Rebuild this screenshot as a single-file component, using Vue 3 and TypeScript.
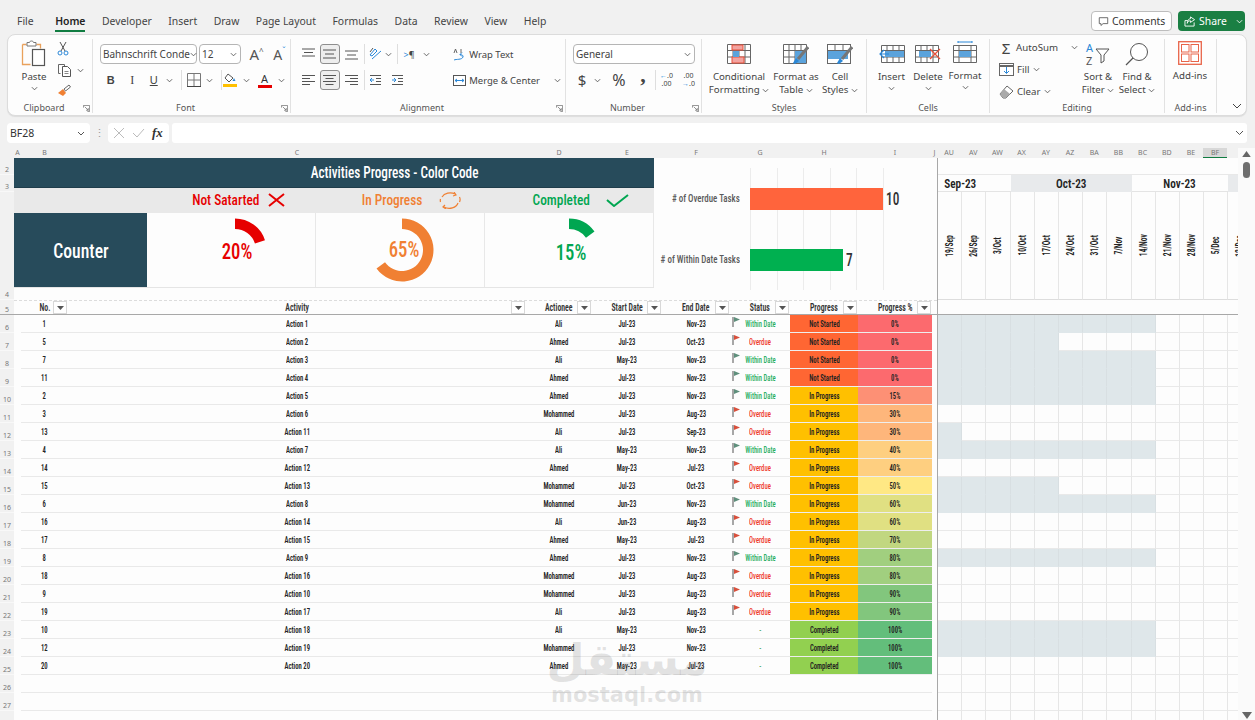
<script setup lang="ts">
interface Row { no: number; action: string; who: string; start: string; end: string; status: string; progress: string; pct: number; shade: number }

const raw: [number, number, string, string, string, string, string, number, number][] = [
  [1, 1, 'Ali', 'Jul-23', 'Nov-23', 'W', 'N', 0, 9],
  [5, 2, 'Ahmed', 'Jul-23', 'Oct-23', 'O', 'N', 0, 5],
  [7, 3, 'Ali', 'May-23', 'Nov-23', 'W', 'N', 0, 9],
  [11, 4, 'Ahmed', 'Jul-23', 'Nov-23', 'W', 'N', 0, 9],
  [2, 5, 'Ahmed', 'Jul-23', 'Nov-23', 'W', 'P', 15, 9],
  [3, 6, 'Mohammed', 'Jul-23', 'Aug-23', 'O', 'P', 30, 0],
  [13, 11, 'Ali', 'Jul-23', 'Sep-23', 'O', 'P', 30, 1],
  [4, 7, 'Ali', 'May-23', 'Nov-23', 'W', 'P', 40, 9],
  [14, 12, 'Ahmed', 'May-23', 'Jul-23', 'O', 'P', 40, 0],
  [15, 13, 'Mohammed', 'Jul-23', 'Oct-23', 'O', 'P', 50, 5],
  [6, 8, 'Mohammed', 'Jun-23', 'Nov-23', 'W', 'P', 60, 9],
  [16, 14, 'Ali', 'Jun-23', 'Aug-23', 'O', 'P', 60, 0],
  [17, 15, 'Ahmed', 'May-23', 'Jul-23', 'O', 'P', 70, 0],
  [8, 9, 'Ahmed', 'Jul-23', 'Nov-23', 'W', 'P', 80, 9],
  [18, 16, 'Mohammed', 'Jul-23', 'Aug-23', 'O', 'P', 80, 0],
  [9, 10, 'Mohammed', 'Jul-23', 'Aug-23', 'O', 'P', 90, 0],
  [19, 17, 'Ali', 'Jul-23', 'Aug-23', 'O', 'P', 90, 0],
  [10, 18, 'Ali', 'May-23', 'Nov-23', '-', 'C', 100, 9],
  [12, 19, 'Mohammed', 'Jul-23', 'Nov-23', '-', 'C', 100, 9],
  [20, 20, 'Ahmed', 'May-23', 'Jul-23', '-', 'C', 100, 0],
]
const labels: Record<string, string> = { N: 'Not Started', P: 'In Progress', C: 'Completed' }
const rows: Row[] = raw.map((r) => ({
  no: r[0], action: 'Action ' + r[1], who: r[2], start: r[3], end: r[4], status: r[5], progress: r[6], pct: r[7], shade: r[8],
}))

function mix(a: number[], b: number[], t: number): string {
  return `rgb(${a.map((v, i) => Math.round(v + (b[i] - v) * t)).join(',')})`
}
function scale(p: number): string {
  const red = [252, 106, 110], yel = [255, 232, 132], grn = [99, 190, 123]
  return p <= 50 ? mix(red, yel, p / 50) : mix(yel, grn, (p - 50) / 50)
}

const tabs = ['File', 'Home', 'Developer', 'Insert', 'Draw', 'Page Layout', 'Formulas', 'Data', 'Review', 'View', 'Help']
const colsA = [['A', 7], ['B', 47], ['C', 458], ['D', 66], ['E', 70], ['F', 68], ['G', 60], ['H', 68], ['I', 74], ['J', 5]] as [string, number][]
const colsB = ['AU', 'AV', 'AW', 'AX', 'AY', 'AZ', 'BA', 'BB', 'BC', 'BD', 'BE', 'BF', '']
const dates = ['19/Sep', '26/Sep', '3/Oct', '10/Oct', '17/Oct', '24/Oct', '31/Oct', '7/Nov', '14/Nov', '21/Nov', '28/Nov', '5/Dec', '12/Dec']
const heads = ['No.', 'Activity', 'Actionee', 'Start Date', 'End Date', 'Status', 'Progress', 'Progress %']

const rowHeads: { n: number; h: number }[] = [
  { n: 2, h: 17 }, { n: 3, h: 17 }, { n: 4, h: 108 }, { n: 5, h: 15 },
  ...Array.from({ length: 22 }, (_, i) => ({ n: i + 6, h: 18 })),
]

// ring gauge: returns an annular sector path for a share of the circle
function arc(p: number): string {
  const R = 31.5, r = 21, c = 33
  const a = (p / 100) * Math.PI * 2
  const large = p > 50 ? 1 : 0
  const sx = c + R * Math.sin(a), sy = c - R * Math.cos(a)
  const ix = c + r * Math.sin(a), iy = c - r * Math.cos(a)
  return `M${c} ${c - R}A${R} ${R} 0 ${large} 1 ${sx} ${sy}L${ix} ${iy}A${r} ${r} 0 ${large} 0 ${c} ${c - r}Z`
}
const gauges = [
  { p: 20, color: '#e60000', pad: 7, top: 22 },
  { p: 65, color: '#f08033', pad: 4, top: 20 },
  { p: 15, color: '#00a651', pad: 0, top: 23 },
]
</script>

<template>
  <div class="app">
    <header class="menu">
      <nav class="tabs">
        <span v-for="t in tabs" :key="t" class="tab" :class="{ on: t === 'Home' }">{{ t }}</span>
      </nav>
      <button class="comments">
        <svg width="11" height="11" viewBox="0 0 13 12"><path d="M1.500 1.500h10v7H6l-2.500 2.200V8.500h-2z" fill="none" stroke="#555" /></svg>
        Comments
      </button>
      <button class="share">
        <svg width="12" height="11" viewBox="0 0 13 12"><path d="M1 5v6h10V7M1 5h3M7 1l4.500 3L7 7V5.200C5 5.200 4 6 3.500 8 3.500 5 5 3 7 3z" fill="none" stroke="#fff" /></svg>
        Share
        <svg class="chev w" viewBox="0 0 8 5"><path d="M1 1l3 3 3-3" /></svg>
      </button>
    </header>

    <section class="ribbon">
      <div class="grp" style="width: 85px">
        <div class="body clip">
          <div class="big paste">
            <svg width="26" height="27" viewBox="0 0 26 27">
              <path d="M1.500 4.500h4M15.500 4.500h4v4M1.500 4.500v20h8" fill="none" stroke="#e9a15b" stroke-width="1.300" />
              <path d="M6 5V2.500h2.500c0-2 4-2 4 0H15V6H6z" fill="#fff" stroke="#777" />
              <rect x="11.500" y="9.500" width="12" height="16" fill="#fff" stroke="#555" stroke-width="1.200" />
            </svg>
            <span>Paste</span>
            <svg class="chev" viewBox="0 0 8 5"><path d="M1 1l3 3 3-3" /></svg>
          </div>
          <div class="stack3">
            <svg width="12" height="14" viewBox="0 0 12 14"><path d="M3 0l5 9M9 0L4 9" fill="none" stroke="#555" /><circle cx="3" cy="11" r="2" fill="none" stroke="#2b88d8" /><circle cx="9" cy="11" r="2" fill="none" stroke="#2b88d8" /></svg>
            <span class="rowi"><svg width="15" height="14" viewBox="0 0 15 14"><path d="M3.500 10.500h-2v-9h6v2" fill="none" stroke="#666" /><path d="M5.500 3.500h5l3 3v7h-8z" fill="#fff" stroke="#555" /><path d="M7.500 8.500h4M7.500 10.500h4" stroke="#888" /></svg><svg class="chev" viewBox="0 0 8 5"><path d="M1 1l3 3 3-3" /></svg></span>
            <svg width="14" height="13" viewBox="0 0 14 13"><path d="M1 9l5-4 3 4-3 3z" fill="#f08033" /><path d="M7 5l5-4 1.500 2-5 4z" fill="#fff" stroke="#666" /></svg>
          </div>
        </div>
        <div class="lbl ln">Clipboard</div>
        <svg class="launch" viewBox="0 0 8 8"><path d="M.5 3V.5H7.500V7.500H5M2 2l4 4M6 3.500V6H3.500" /></svg>
      </div>

      <div class="grp" style="width: 198px">
        <div class="body two">
          <div class="line font1">
            <div class="sel" style="width: 97px"><span>Bahnschrift Conde</span><svg class="chev" viewBox="0 0 8 5"><path d="M1 1l3 3 3-3" /></svg></div>
            <div class="sel" style="width: 42px"><span>12</span><svg class="chev" viewBox="0 0 8 5"><path d="M1 1l3 3 3-3" /></svg></div>
            <span class="aa big1">A<sup>^</sup></span>
            <span class="aa">A<sup class="blue">ˇ</sup></span>
          </div>
          <div class="line font2">
            <b class="t">B</b><i class="t ser">I</i><u class="t">U</u>
            <svg class="chev" viewBox="0 0 8 5"><path d="M1 1l3 3 3-3" /></svg>
            <em class="vsep"></em>
            <svg class="ico" width="14" height="14" viewBox="0 0 14 14"><path d="M.5.500h13v13H.5zM7 .5v13M.5 7h13" fill="none" stroke="#777" /><path d="M0 13.500h14" stroke="#444" /></svg>
            <svg class="chev" viewBox="0 0 8 5"><path d="M1 1l3 3 3-3" /></svg>
            <em class="vsep s3"></em>
            <span class="fillc"><svg width="14" height="10" viewBox="0 0 14 10"><path d="M5 1l5 4-4 4-4-4z" fill="#fff" stroke="#555" /><path d="M11 5l1.500 3h-3z" fill="#2b88d8" /></svg><i class="bar y"></i></span>
            <svg class="chev" viewBox="0 0 8 5"><path d="M1 1l3 3 3-3" /></svg>
            <span class="fillc a1"><span>A</span><i class="bar r"></i></span>
            <svg class="chev" viewBox="0 0 8 5"><path d="M1 1l3 3 3-3" /></svg>
          </div>
        </div>
        <div class="lbl ln">Font</div>
        <svg class="launch" viewBox="0 0 8 8"><path d="M.5 3V.5H7.500V7.500H5M2 2l4 4M6 3.500V6H3.500" /></svg>
      </div>

      <div class="grp" style="width: 275px">
        <div class="body alg">
          <div class="alg-l">
            <div class="line agap">
              <span class="ab"><svg width="13" height="12" viewBox="0 0 13 12"><path d="M0 1h13M2 4.500h9M0 8h13" stroke="#555" /></svg></span>
              <span class="ab act"><svg width="13" height="12" viewBox="0 0 13 12"><path d="M0 2h13M2 6h9M0 10h13" stroke="#555" /></svg></span>
              <span class="ab"><svg width="13" height="12" viewBox="0 0 13 12"><path d="M0 3h13M2 7h9M0 11h13" stroke="#555" /></svg></span>
              <em class="vsep"></em>
              <span class="ab"><svg width="14" height="14" viewBox="0 0 14 14"><path d="M1 8l5-6 2 2-5 5zM3 12l9-8" fill="none" stroke="#2b88d8" /><path d="M1 5l3-4" stroke="#555" /></svg></span>
              <svg class="chev c1" viewBox="0 0 8 5"><path d="M1 1l3 3 3-3" /></svg>
              <em class="vsep s2"></em>
              <span class="ab rtl"><em class="blue">&gt;</em>¶</span>
              <svg class="chev" viewBox="0 0 8 5"><path d="M1 1l3 3 3-3" /></svg>
            </div>
            <div class="line agap">
              <span class="ab"><svg width="13" height="12" viewBox="0 0 13 12"><path d="M0 1.500h13M0 4.500h8M0 7.500h13M0 10.500h8" stroke="#555" /></svg></span>
              <span class="ab act"><svg width="13" height="12" viewBox="0 0 13 12"><path d="M0 1.500h13M2.500 4.500h8M0 7.500h13M2.500 10.500h8" stroke="#555" /></svg></span>
              <span class="ab"><svg width="13" height="12" viewBox="0 0 13 12"><path d="M0 1.500h13M5 4.500h8M0 7.500h13M5 10.500h8" stroke="#555" /></svg></span>
              <em class="vsep"></em>
              <span class="ab"><svg width="13" height="12" viewBox="0 0 13 12"><path d="M1 1.500h11M7 4.500h5M7 7.500h5M1 10.500h11" stroke="#555" /><path d="M5 6H1M3 4L1 6l2 2" fill="none" stroke="#2b88d8" /></svg></span>
              <span class="ab"><svg width="13" height="12" viewBox="0 0 13 12"><path d="M1 1.500h11M7 4.500h5M7 7.500h5M1 10.500h11" stroke="#555" /><path d="M1 6h4M3 4l2 2-2 2" fill="none" stroke="#2b88d8" /></svg></span>
            </div>
          </div>
          <div class="alg-r">
            <div class="line wrap">
              <svg width="13" height="13" viewBox="0 0 13 13"><path d="M1 12c2-1 8 0 9-3 .5-1.500-1-2.500-3-2.500M7 6.500l2-2M7 6.500l2 2" fill="none" stroke="#2b88d8" /><path d="M1 5l1.500-4L4 5M8 1v4" fill="none" stroke="#666" /></svg>
              <span>Wrap Text</span>
            </div>
            <div class="line wrap">
              <svg width="13" height="13" viewBox="0 0 13 13"><rect x=".5" y="1.500" width="12" height="10" fill="#fff" stroke="#555" /><path d="M2 6.500h9M2 6.500l2-1.500M2 6.500l2 1.500M11 6.500l-2-1.500M11 6.500l-2 1.500" fill="none" stroke="#2b88d8" /></svg>
              <span>Merge &amp; Center</span>
              <svg class="chev" viewBox="0 0 8 5"><path d="M1 1l3 3 3-3" /></svg>
            </div>
          </div>
        </div>
        <div class="lbl ln">Alignment</div>
        <svg class="launch" viewBox="0 0 8 8"><path d="M.5 3V.5H7.500V7.500H5M2 2l4 4M6 3.500V6H3.500" /></svg>
      </div>

      <div class="grp" style="width: 136px">
        <div class="body two num">
          <div class="sel" style="width: 122px"><span>General</span><svg class="chev" viewBox="0 0 8 5"><path d="M1 1l3 3 3-3" /></svg></div>
          <div class="line nums">
            <span class="sym">$</span><svg class="chev" viewBox="0 0 8 5"><path d="M1 1l3 3 3-3" /></svg>
            <span class="sym pct">%</span>
            <span class="sym cm">,</span>
            <em class="vsep"></em>
            <span class="dec"><em class="blue">←</em>.0<br />.00</span>
            <span class="dec">.00<br /><em class="blue">→</em>.0</span>
          </div>
        </div>
        <div class="lbl ln">Number</div>
        <svg class="launch" viewBox="0 0 8 8"><path d="M.5 3V.5H7.500V7.500H5M2 2l4 4M6 3.500V6H3.500" /></svg>
      </div>

      <div class="grp" style="width: 165px">
        <div class="body bigs styles">
          <div class="big" style="width: 64px">
            <svg width="24" height="20" viewBox="0 0 24 20"><path d="M.5.500h23v19H.5zM6 .5v19M12 .5v19M18 .5v19M.5 6.500h23M.5 13h23" fill="#fff" stroke="#666" /><rect x="5" y="1" width="11" height="5" fill="#f2a3a0" stroke="#e8503a" /><rect x="5" y="13" width="12" height="6" fill="#f2a3a0" stroke="#e8503a" /><rect x="6" y="7" width="6" height="6" fill="#5ba3dc" /></svg>
            <span>Conditional</span><span>Formatting <svg class="chev" viewBox="0 0 8 5"><path d="M1 1l3 3 3-3" /></svg></span>
          </div>
          <div class="big" style="width: 50px">
            <svg width="26" height="20" viewBox="0 0 26 20"><path d="M.5.500h23v19H.5zM6 .5v19M12 .5v19M18 .5v19M.5 6.500h23M.5 13h23" fill="#fff" stroke="#666" /><rect x="12" y="7" width="11" height="12" fill="#5ba3dc" /><path d="M25 3L15 15" stroke="#777" stroke-width="3" /><path d="M13 14l3 3-4 3-2-1z" fill="#2b88d8" /></svg>
            <span>Format as</span><span>Table <svg class="chev" viewBox="0 0 8 5"><path d="M1 1l3 3 3-3" /></svg></span>
          </div>
          <div class="big" style="width: 38px">
            <svg width="26" height="20" viewBox="0 0 26 20"><rect x=".5" y=".5" width="23" height="19" fill="#fff" stroke="#666" /><path d="M.5 6.500h23M8 .5v6M16 .5v6" stroke="#666" fill="none" /><rect x="1" y="7" width="20" height="8" fill="#5ba3dc" /><path d="M25 3L15 15" stroke="#777" stroke-width="3" /><path d="M13 14l3 3-4 3-2-1z" fill="#2b88d8" /></svg>
            <span>Cell</span><span>Styles <svg class="chev" viewBox="0 0 8 5"><path d="M1 1l3 3 3-3" /></svg></span>
          </div>
        </div>
        <div class="lbl">Styles</div>
      </div>

      <div class="grp" style="width: 123px">
        <div class="body bigs cells">
          <div class="big" style="width: 37px">
            <svg width="26" height="20" viewBox="0 0 26 20"><path d="M2.500 1.500h23v17h-23zM8 1.500v17M14 1.500v17M20 1.500v17M2.500 6.500h23M2.500 13h23" fill="#fff" stroke="#666" /><rect x="6" y="7" width="19" height="6" fill="#5ba3dc" /><path d="M10 10H1M5 6l-4 4 4 4" fill="none" stroke="#2b88d8" stroke-width="1.200" /></svg>
            <span>Insert</span>
            <svg class="chev" viewBox="0 0 8 5"><path d="M1 1l3 3 3-3" /></svg>
          </div>
          <div class="big" style="width: 36px">
            <svg width="26" height="20" viewBox="0 0 26 20"><path d="M.5 1.500h23v17H.5zM6 1.500v17M12 1.500v17M18 1.500v17M.5 6.500h23M.5 13h23" fill="#fff" stroke="#666" /><rect x="4" y="7" width="12" height="6" fill="#5ba3dc" /><path d="M15 5l10 10M25 5L15 15" stroke="#e8503a" stroke-width="1.300" /></svg>
            <span>Delete</span>
            <svg class="chev" viewBox="0 0 8 5"><path d="M1 1l3 3 3-3" /></svg>
          </div>
          <div class="big" style="width: 38px">
            <svg width="24" height="22" viewBox="0 0 24 22" class="up u2"><path d="M.5 4.500h23v17H.5zM6 4.500v17M18 4.500v17M.5 9.500h23M.5 16h23" fill="#fff" stroke="#666" /><rect x="6" y="10" width="12" height="6" fill="#5ba3dc" /><path d="M5 1h14M5 0v2M19 0v2" stroke="#2b88d8" /></svg>
            <span>Format</span>
            <svg class="chev" viewBox="0 0 8 5"><path d="M1 1l3 3 3-3" /></svg>
          </div>
        </div>
        <div class="lbl">Cells</div>
      </div>

      <div class="grp" style="width: 175px">
        <div class="body bigs edit">
          <div class="ecol">
            <div class="line"><span class="sig">Σ</span><span>AutoSum</span><svg class="chev far" viewBox="0 0 8 5"><path d="M1 1l3 3 3-3" /></svg></div>
            <div class="line"><svg width="15" height="13" viewBox="0 0 15 13"><rect x=".5" y=".5" width="14" height="12" fill="#fff" stroke="#666" /><path d="M.5 3h14" stroke="#666" stroke-width="2" /><path d="M7.500 4v6M5 8l2.500 2.500L10 8" fill="none" stroke="#2b88d8" /></svg><span>Fill</span><svg class="chev" viewBox="0 0 8 5"><path d="M1 1l3 3 3-3" /></svg></div>
            <div class="line"><svg width="15" height="14" viewBox="0 0 15 14"><path d="M1 9l7-8 6 5-7 7H4z" fill="#fff" stroke="#666" /><path d="M1 9l4-5 6 5-4 4H4z" fill="#aaa" /></svg><span>Clear</span><svg class="chev" viewBox="0 0 8 5"><path d="M1 1l3 3 3-3" /></svg></div>
          </div>
          <div class="big" style="width: 40px">
            <svg width="26" height="26" viewBox="0 0 26 26" class="up"><text x="1" y="11" font-size="11" fill="#2b88d8" font-family="Noto Sans">A</text><text x="1" y="24" font-size="11" fill="#555" font-family="Noto Sans">Z</text><path d="M11 8h13l-5 6v6l-3 2v-8z" fill="#fff" stroke="#555" /></svg>
            <span>Sort &amp;</span><span>Filter <svg class="chev" viewBox="0 0 8 5"><path d="M1 1l3 3 3-3" /></svg></span>
          </div>
          <div class="big" style="width: 38px">
            <svg width="26" height="26" viewBox="0 0 26 26" class="up"><circle cx="15" cy="11" r="8.500" fill="#fff" stroke="#555" /><path d="M9 17L2 24" stroke="#555" stroke-width="1.200" /></svg>
            <span>Find &amp;</span><span>Select <svg class="chev" viewBox="0 0 8 5"><path d="M1 1l3 3 3-3" /></svg></span>
          </div>
        </div>
        <div class="lbl">Editing</div>
      </div>

      <div class="grp" style="width: 52px">
        <div class="body bigs adds">
          <div class="big" style="width: 50px">
            <svg width="24" height="24" viewBox="0 0 24 24" class="up"><rect x=".7" y=".7" width="22.600" height="22.600" fill="#fff" stroke="#e8654a" stroke-width="1.300" /><rect x="3.500" y="3.500" width="7.500" height="7.500" fill="none" stroke="#e8654a" /><rect x="13" y="3.500" width="7.500" height="7.500" fill="none" stroke="#e8654a" /><rect x="3.500" y="13" width="7.500" height="7.500" fill="none" stroke="#e8654a" /><rect x="13" y="13" width="7.500" height="7.500" fill="none" stroke="#e8654a" /></svg>
            <span class="lift">Add-ins</span>
          </div>
        </div>
        <div class="lbl">Add-ins</div>
      </div>
      <div class="collapse"><svg width="10" height="6" viewBox="0 0 10 6"><path d="M1 1l4 4 4-4" fill="none" stroke="#444" /></svg></div>
    </section>

    <section class="fbar">
      <div class="name"><span>BF28</span><svg class="chev d" viewBox="0 0 8 5"><path d="M1 1l3 3 3-3" /></svg></div>
      <span class="dots">⋮</span>
      <div class="fx">
        <svg width="12" height="12" viewBox="0 0 12 12"><path d="M1 1l10 10M11 1L1 11" stroke="#bbb" /></svg>
        <svg width="13" height="12" viewBox="0 0 13 12"><path d="M1 6l4 4 7-8" fill="none" stroke="#bbb" /></svg>
        <span class="fxt">fx</span>
      </div>
      <div class="input"><svg width="9" height="6" viewBox="0 0 9 6"><path d="M1 1l3.500 3.500L8 1" fill="none" stroke="#555" /></svg></div>
    </section>

    <div class="colbar">
      <div class="colhead">
        <span class="corner"></span>
        <span v-for="c in colsA" :key="c[0]" class="ch" :style="{ width: c[1] + 'px' }">{{ c[0] }}</span>
        <span v-for="(c, i) in colsB" :key="i" class="ch cb" :class="{ cur: c === 'BF' }">{{ c }}</span>
      </div>
      <div class="sup"><svg width="9" height="6" viewBox="0 0 10 7"><path d="M0 7L5 0l5 7z" fill="#666" /></svg></div>
    </div>

    <section class="sheet">
      <aside class="rowhead">
        <span v-for="r in rowHeads" :key="r.n" class="rh" :class="{ cur: r.n === 28, frz: r.n === 5 }" :style="{ height: r.h + 'px' }">{{ r.n === 28 ? '' : r.n }}</span>
      </aside>

      <main class="main">
        <div class="dash">
          <div class="panel">
            <div class="title cd"><span>Activities Progress - Color Code</span></div>
            <div class="band">
              <span class="b0"></span>
              <div class="bi b1 red cd"><span>Not Satarted</span><svg width="17" height="14" viewBox="0 0 17 14"><path d="M1 1l15 12M16 1L1 13" stroke="#e60000" stroke-width="2" /></svg></div>
              <div class="bi b2 org cd"><span>In Progress</span><svg width="22" height="17" viewBox="0 0 22 17"><path d="M3 5a9 7 0 0 1 13-3M19 11a9 7 0 0 1-14 4M1.500 10a9 7 0 0 1 0-3M20.500 5a9 7 0 0 1 0 5" fill="none" stroke="#f08033" stroke-width="1.200" /><path d="M15 0l2 3-3 1M6 13l-2 2 3 2" fill="none" stroke="#f08033" stroke-width="1.200" /></svg></div>
              <div class="bi b3 grn cd"><span>Completed</span><svg width="23" height="13" viewBox="0 0 23 13"><path d="M1 6l7 6L22 1" fill="none" stroke="#00a651" stroke-width="2" /></svg></div>
            </div>
            <div class="stats">
              <div class="counter cd"><span>Counter</span></div>
              <div v-for="g in gauges" :key="g.p" class="gauge" :style="{ paddingLeft: g.pad + 'px' }">
                <div class="gw">
                  <svg width="66" height="66" viewBox="0 0 66 66"><path :d="arc(g.p)" :fill="g.color" /></svg>
                  <span class="gv cd" :style="{ color: g.color, top: g.top + 'px' }"><span>{{ g.p }}%</span></span>
                </div>
              </div>
            </div>
          </div>
          <div class="chart">
            <div class="crow">
              <span class="clbl cd"><span># of Overdue Tasks</span></span>
              <div class="plot"><i class="cbar o"></i><span class="cval cd"><span>10</span></span></div>
            </div>
            <div class="crow">
              <span class="clbl cd"><span># of Within Date Tasks</span></span>
              <div class="plot"><i class="cbar g"></i><span class="cval cd"><span>7</span></span></div>
            </div>
          </div>
        </div>

        <div class="trow thead">
          <span class="a"></span>
          <span v-for="h in heads" :key="h" class="th cd"><span class="tl">{{ h }}</span><i class="flt"><svg width="7" height="4" viewBox="0 0 7 4"><path d="M0 0h7L3.500 4z" fill="#555" /></svg></i></span>
          <span class="a"></span>
        </div>
        <div v-for="r in rows" :key="r.no" class="trow">
          <span class="a"></span>
          <span class="td cd"><span>{{ r.no }}</span></span>
          <span class="td cd"><span>{{ r.action }}</span></span>
          <span class="td cd"><span>{{ r.who }}</span></span>
          <span class="td cd"><span>{{ r.start }}</span></span>
          <span class="td cd"><span>{{ r.end }}</span></span>
          <span class="td st cd" :class="r.status">
            <svg v-if="r.status !== '-'" class="flag" width="10" height="10" viewBox="0 0 10 10"><path d="M1 0v10" stroke="#8a8a8a" stroke-width="1.500" /><path d="M2 0l6 2.500L2 5z" :fill="r.status === 'W' ? '#5f8f7c' : '#d8503c'" /></svg>
            <span class="stx">{{ r.status === 'W' ? 'Within Date' : r.status === 'O' ? 'Overdue' : '-' }}</span>
          </span>
          <span class="td pr cd" :class="r.progress"><span>{{ labels[r.progress] }}</span></span>
          <span class="td pc cd" :style="{ background: scale(r.pct) }"><span>{{ r.pct }}%</span></span>
          <span class="a"></span>
        </div>
        <div v-for="n in 4" :key="'e' + n" class="trow">
          <span class="a"></span>
          <span v-for="m in 8" :key="m" class="td"></span>
          <span class="a"></span>
        </div>
        <div class="mark" aria-hidden="true">
          <span class="mar">مستقل</span>
          <span class="men">mostaql.com</span>
        </div>
      </main>

      <div class="gantt">
        <div class="g0"></div>
        <div class="gm">
          <span class="m lead cd" style="grid-column: span 3"><span>Sep-23</span></span>
          <span class="m alt cd" style="grid-column: span 5"><span>Oct-23</span></span>
          <span class="m cd" style="grid-column: span 4"><span>Nov-23</span></span>
          <span class="m alt"></span>
        </div>
        <div class="gd">
          <span v-for="d in dates" :key="d" class="gdc"><span class="vt">{{ d }}</span></span>
        </div>
        <div class="gb"></div>
        <div v-for="(r, i) in rows" :key="i" class="gr">
          <span v-for="k in 13" :key="k" class="gc" :class="{ sh: k <= r.shade }"></span>
        </div>
        <div v-for="n in 4" :key="'g' + n" class="gr">
          <span v-for="k in 13" :key="k" class="gc" :class="{ sel: n === 4 && k === 12 }"></span>
        </div>
      </div>

      <aside class="vs">
        <i class="thumb"></i>
        <svg class="dn" width="10" height="7" viewBox="0 0 10 7"><path d="M0 0l5 7 5-7z" fill="#666" /></svg>
      </aside>
    </section>
  </div>
</template>

<style>
html, body { margin: 0; background: #f1f1f1; }
</style>

<style scoped>
.app { width: 1255px; height: 720px; overflow: hidden; display: flex; flex-direction: column; background: #f1f1f1; font-family: "Noto Sans", sans-serif; color: #444; font-size: 10.5px; }
svg { flex: none; display: block; }
em, i { font-style: normal; }
.chev { width: 7px; height: 5px; fill: none; stroke: #555; stroke-width: 1; display: inline-block; }
.chev.w { stroke: #fff; }

.menu { height: 34px; display: flex; align-items: flex-start; padding-left: 17px; box-sizing: border-box; flex: none; }
.tabs { flex: 1; display: flex; gap: 16.500px; font-size: 10.400px; padding-top: 13px; }
.tab { height: 17px; line-height: 16px; }
.tab:first-child { margin-right: 5px; }
.tab.on { color: #222; font-weight: 600; border-bottom: 2px solid #107c41; }
.comments, .share { font: inherit; display: flex; align-items: center; height: 20px; margin-top: 11px; box-sizing: border-box; border-radius: 4px; gap: 3px; }
.comments { width: 81px; background: #fff; border: 1px solid #bdbdbd; padding: 0 0 0 6px; font-size: 10.400px; color: #333; }
.share { width: 67px; margin: 11px 10px 0 6px; background: #1a7f43; border: 0; color: #fff; padding: 0 0 0 6px; font-size: 10.400px; }
.share .chev { margin-left: 6px; }

.ribbon { flex: none; height: 82px; margin: 0 8px 0 7px; box-sizing: border-box; background: #fdfdfd; border: 1px solid #dcdcdc; border-radius: 8px; display: flex; box-shadow: 0 1px 1px #ddd; position: relative; }
.grp { position: relative; flex: none; display: flex; flex-direction: column; border-right: 1px solid #e2e2e2; margin: 4px 0 2px; box-sizing: border-box; }
.body { flex: 1; display: flex; min-height: 0; }
.lbl { height: 11px; line-height: 11px; font-size: 9px; text-align: center; color: #555; }
.lbl.ln { padding-right: 12px; }
.launch { position: absolute; right: 2px; bottom: 1px; width: 7px; height: 7px; fill: none; stroke: #666; stroke-width: .8; }

.big { display: flex; flex-direction: column; align-items: center; line-height: 13px; white-space: nowrap; font-size: 9.700px; }
.big > svg:first-child { margin-bottom: 6px; height: 20px; }
.big > svg.up { margin-top: -3px; margin-bottom: 3px; height: auto; }
.big > svg.u2 { margin-bottom: 6px; }
.big > .chev { margin-top: 3px; }
.big .lift { margin-top: 1px; }
.clip { padding: 0 0 0 13px; gap: 10px; }
.paste { width: 26px; padding-top: 1px; }
.paste > svg:first-child { height: 27px; margin-bottom: 3px; }
.stack3 { display: flex; flex-direction: column; gap: 7px; padding-top: 3px; }
.rowi { display: flex; align-items: center; gap: 5px; }

.two { flex-direction: column; gap: 6px; padding: 5px 0 0 7px; }
.line { display: flex; align-items: center; height: 20px; white-space: nowrap; }
.sel { height: 20px; box-sizing: border-box; border: 1px solid #b5b5b5; border-radius: 4px; display: flex; align-items: center; justify-content: space-between; padding: 0 3px 0 2px; background: #fff; font-size: 10px; color: #444; }
.font1 { gap: 2px; }
.aa { font-size: 14px; width: 21px; text-align: center; color: #555; }
.aa sup { font-size: 8px; line-height: 0; }
.aa.big1 { font-size: 15px; margin-left: 3px; }
.blue { color: #2b88d8; font-style: normal; }
.font2 { gap: 0; color: #444; }
.t { width: 21.500px; text-align: center; font-size: 11px; font-family: "Liberation Sans", sans-serif; }
.ser { font-family: "Liberation Serif", serif; font-size: 12px; }
.font2 .chev { margin: 0 3px 0 1px; }
.vsep { width: 1px; height: 20px; background: #dedede; margin: 0 5px; flex: none; }
.font2 .s3 { margin-right: 1px; }
.font2 .ico { margin-left: 0; margin-right: 4px; }
.fillc { display: flex; flex-direction: column; align-items: center; width: 14px; margin-right: 5px; gap: 1px; }
.a1 { margin-left: 5px; font-size: 11px; line-height: 11px; color: #333; }
.bar { display: block; width: 14px; height: 3px; }
.bar.y { background: #ffc000; }
.bar.r { background: #e60000; }

.alg { padding: 5px 0 0 7px; }
.alg-l { display: flex; flex-direction: column; gap: 6px; width: 151px; }
.agap { gap: 0; }
.ab { width: 20px; height: 20px; margin-right: 1.500px; display: flex; align-items: center; justify-content: center; box-sizing: border-box; font-size: 10px; color: #444; }
.ab.act { border: 1px solid #8e8e8e; background: #eeeeee; border-radius: 3px; }
.alg .vsep { margin: 0 1px 0 1px; }
.alg .chev { margin: 0 4px 0 2px; }
.alg .c1 { margin: 0 1px 0 -2px; }
.alg .s2 { margin-left: 4px; }
.rtl { font-size: 9px; }
.alg-r { display: flex; flex-direction: column; gap: 6px; padding-left: 5px; }
.wrap { gap: 3px; font-size: 9.500px; }
.wrap .chev { margin-left: 11px; }

.num { padding-left: 7px; }
.num .sel { font-size: 10px; }
.nums { padding-left: 1.500px; }
.sym { width: 15px; font-size: 15px; text-align: center; color: #444; }
.nums .chev { margin: 0 10px 0 4px; }
.pct { width: 17px; font-size: 16px; margin-right: 8px; }
.cm { font-weight: 700; font-family: "Liberation Serif", serif; font-size: 22px; line-height: 12px; margin-right: 2px; transform: translateY(-5px); }
.nums .vsep { margin: 0 1px 0 2px; }
.dec { width: 20px; font-size: 7px; line-height: 8px; text-align: center; margin-right: 2px; color: #444; }

.bigs { padding-top: 5px; }
.styles { padding-left: 5px; }
.cells { padding-left: 6px; }
.edit { padding-left: 9px; }
.ecol { width: 79px; display: flex; flex-direction: column; gap: 1px; margin-top: -7px; font-size: 9.700px; }
.ecol .line { gap: 3px; height: 21px; }
.sig { font-size: 15px; width: 15px; text-align: center; }
.far { margin-left: 10px; }
.adds { padding-top: 5px; }
.collapse { display: flex; align-items: flex-end; padding: 0 0 6px 15px; }

.fbar { flex: none; display: flex; height: 20px; margin: 7px 8px 0 7px; align-items: stretch; }
.name { width: 83px; background: #fff; border-radius: 4px; display: flex; align-items: center; justify-content: space-between; padding: 0 5px 0 3px; box-sizing: border-box; font-size: 10.500px; color: #333; }
.chev.d { width: 8px; }
.dots { width: 18px; text-align: center; line-height: 20px; color: #999; }
.fx { width: 61px; background: #fff; border-radius: 4px; display: flex; align-items: center; gap: 7px; padding-left: 5px; box-sizing: border-box; }
.fxt { font: italic 700 13px "Liberation Serif", serif; color: #333; }
.input { flex: 1; background: #fff; margin-left: 3px; border-radius: 3px; display: flex; align-items: center; justify-content: flex-end; padding-right: 3px; }

.colbar { flex: none; height: 10px; margin-top: 5px; display: flex; }
.colhead { display: flex; font-size: 7px; line-height: 10px; color: #777; text-align: center; overflow: hidden; width: 1238px; flex: none; }
.sup { flex: 1; background: #fafafa; display: flex; justify-content: center; align-items: flex-end; padding-bottom: 1px; }
.corner { width: 14px; flex: none; }
.ch { flex: none; overflow: hidden; }
.cb { width: 24.200px; }
.ch.cur { background: #d8d8d8; border-bottom: 1px solid #107c41; box-sizing: border-box; }

.sheet { flex: 1; min-height: 0; display: flex; overflow: hidden; background: #fdfdfd; }
.rowhead { width: 14px; flex: none; display: flex; flex-direction: column; background: #f1f1f1; }
.rh { flex: none; font-size: 7px; color: #777; text-align: center; display: flex; align-items: flex-end; justify-content: center; box-sizing: border-box; border-bottom: 1px solid #f8f8f8; }
.rh.frz { border-bottom: 1px solid #a8a8a8; }
.rh.cur { border-right: 2px solid #107c41; background: #d8d8d8; }

.main { width: 923px; flex: none; position: relative; overflow: hidden; }
.dash { height: 142px; display: flex; }
.panel { width: 640px; flex: none; display: flex; flex-direction: column; }

.cd { font-family: Roboto, sans-serif; font-stretch: 75%; }
.cd > span { display: inline-block; transform: scaleX(.78); white-space: nowrap; }

.title { height: 30px; box-sizing: border-box; background: #274b5b; color: #fff; font-size: 16px; font-weight: 500; display: flex; align-items: center; justify-content: center; padding-left: 122px; border-bottom: 1px solid #1f3d4b; }
.title > span { transform: scaleX(.825); }
.band { height: 25px; background: #e9e9e9; display: grid; grid-template-columns: 133px repeat(3, 169px); }
.bi { display: flex; align-items: center; justify-content: center; font-size: 15px; font-weight: 500; padding-bottom: 1px; box-sizing: border-box; }
.bi > span { transform: scaleX(.89); }
.b1 { padding-left: 10px; gap: 4px; }
.b2 { padding-left: 18px; gap: 13px; }
.b3 { padding-left: 19px; gap: 13px; }
.red { color: #e60000; }
.org { color: #f08033; }
.grn { color: #00a651; }
.stats { height: 75px; display: grid; grid-template-columns: 133px repeat(3, 169px); box-sizing: border-box; border-bottom: 1px solid #e5e5e5; }
.counter { background: #274b5b; color: #fff; font-size: 21px; font-weight: 500; display: flex; align-items: center; justify-content: center; padding-top: 1px; box-sizing: border-box; }
.counter > span { transform: scaleX(.84); }
.gauge { display: flex; justify-content: center; padding-top: 4px; box-sizing: border-box; border-right: 1px solid #e8e8e8; }
.gw { position: relative; width: 66px; height: 66px; }
.gv { position: absolute; left: 2px; right: -2px; text-align: center; font-size: 22px; font-weight: 500; line-height: 26px; }
.gv > span { transform: scaleX(.85); }

.chart { flex: 1; padding-top: 10px; }
.crow { display: grid; grid-template-columns: 86px 183px; column-gap: 10px; height: 61px; align-items: stretch; }
.clbl { display: flex; align-items: center; justify-content: flex-end; color: #5a5a5a; font-size: 11px; font-weight: 500; }
.clbl > span { transform-origin: right center; transform: scaleX(.81); }
.plot { display: flex; align-items: center; gap: 3px; background: repeating-linear-gradient(90deg, #ececec 0 1px, transparent 1px 26.600px); background-size: 160px 100%; background-repeat: no-repeat; }
.cbar { display: block; height: 22px; }
.cbar.o { width: 133px; background: #ff643c; }
.cbar.g { width: 93px; background: #00b050; }
.cval { font-size: 19px; color: #333; font-weight: 500; }
.cval > span { transform: scaleX(.7); transform-origin: left center; }

.trow { height: 18px; display: grid; grid-template-columns: 7px 47px 458px 66px 70px 68px 60px 68px 74px 5px; box-sizing: border-box; }
.thead { height: 15px; border-top: 1px dashed #dcdcdc; border-bottom: 1px solid #a8a8a8; }
.th { position: relative; display: flex; align-items: center; justify-content: center; font-size: 10px; font-weight: 600; color: #333; }
.tl { transform: scaleX(.78); }
.flt { position: absolute; right: 1px; top: 0; width: 14px; height: 13px; box-sizing: border-box; background: #fff; border: 1px solid #d8d8d8; display: flex; align-items: center; justify-content: center; }
.td { display: flex; align-items: center; justify-content: center; box-sizing: border-box; font-size: 8.500px; font-weight: 600; color: #222; border-bottom: 1.500px solid #e9e9e9; }
.st { position: relative; }
.flag { position: absolute; left: 2px; top: 2px; }
.stx { font-weight: 500; }
.st.W { color: #27ae60; }
.st.O { color: #ee3a2c; }
.st.\- { color: #4aa868; }
.pr { border-bottom-color: #eee; }
.pr.N { background: #ff6633; }
.pr.P { background: #ffc000; }
.pr.C { background: #92d050; }
.pc { border-bottom-color: #eee; }

.mark { position: absolute; left: 533px; top: 477px; width: 160px; height: 76px; display: flex; flex-direction: column; align-items: center; color: rgba(110, 110, 110, .19); font-family: "DejaVu Sans", sans-serif; font-weight: 700; pointer-events: none; }
.mar { font-size: 44px; line-height: 50px; }
.men { font-size: 21px; line-height: 20px; }

.gantt { width: 301px; flex: none; border-left: 1.500px solid #a8a8a8; box-sizing: border-box; overflow: hidden; }
.g0 { height: 17px; box-sizing: border-box; border-bottom: 1px solid #e8e8e8; }
.gm { height: 17px; display: grid; grid-template-columns: repeat(13, 24.200px); border-bottom: 1px solid #e4e4e4; box-sizing: border-box; }
.m { display: flex; align-items: center; justify-content: center; font-size: 13.500px; font-weight: 600; color: #222; padding-bottom: 1px; box-sizing: border-box; }
.m > span { transform: scaleX(.83); }
.m.lead { justify-content: flex-start; padding-left: 3px; }
.m.alt { background: #e8eaec; }
.gd { height: 108px; display: grid; grid-template-columns: repeat(13, 24.200px); }
.gdc { border-right: 1.500px solid #e6e6e6; border-bottom: 1px solid #ddd; box-sizing: border-box; display: flex; align-items: center; justify-content: center; }
.vt { writing-mode: vertical-rl; transform: rotate(180deg) scaleY(.72); font: 600 10.500px Roboto, sans-serif; font-stretch: 75%; color: #222; white-space: nowrap; }
.gb { height: 15px; border-bottom: 1px solid #a8a8a8; box-sizing: border-box; }
.gr { height: 18px; display: grid; grid-template-columns: repeat(13, 24.200px); }
.gc { box-sizing: border-box; border-right: 1px solid #e6e6e6; border-bottom: 1.500px solid #e9e9e9; }
.gc.sh { background: #dfe7ea; border-bottom-color: #dfe7ea; border-right-color: #d8dfe2; }
.gc.sel { border: 1.500px solid #107c41; }

.vs { flex: 1; position: relative; display: flex; flex-direction: column; align-items: center; background: #fafafa; }
.thumb { display: block; width: 7px; height: 16px; border-radius: 4px; background: #6e6e6e; margin-top: 4px; }
.dn { position: absolute; bottom: 1px; left: 4px; }
</style>
